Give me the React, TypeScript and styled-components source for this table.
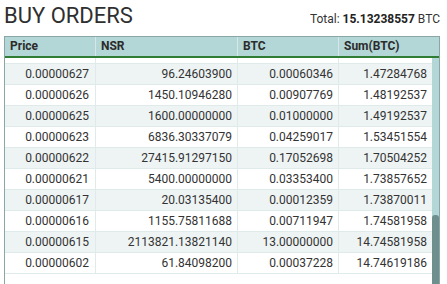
import React from "react";
import styled, { createGlobalStyle } from "styled-components";

const GlobalStyle = createGlobalStyle`
  html, body { margin: 0; padding: 0; background: #ffffff; }
  body { font-family: Roboto, "Liberation Sans", Arial, sans-serif; color: #333333; }
`;

const Page = styled.div`
  width: 447px;
  height: 284px;
  overflow: hidden;
  padding: 0 7px 0 4px;
  box-sizing: border-box;
`;

const TitleBar = styled.div`
  display: flex;
  align-items: baseline;
  justify-content: space-between;
  padding-top: 3px;
  height: 33px;
`;

const Title = styled.h1`
  margin: 0;
  font-size: 22px;
  line-height: 26px;
  font-weight: 400;
  color: #2f2f2f;
  letter-spacing: 0;
`;

const Total = styled.div`
  font-size: 12px;
  line-height: 16px;
  color: #333333;
  b { font-weight: 700; color: #222222; }
`;

const Panel = styled.div`
  border: 1px solid #8aa6a6;
  border-bottom: none;
  display: flex;
  flex-direction: column;
`;

const COLS = "91px 142px 101px 1fr";

const HeaderRow = styled.div`
  display: grid;
  grid-template-columns: ${COLS};
  background: #b3d6d6;
  border-bottom: 2px solid #2f7d34;
`;

const HeaderCell = styled.div<{ $last?: boolean }>`
  height: 19px;
  line-height: 19px;
  padding-left: 5px;
  font-size: 12px;
  font-weight: 700;
  color: #2b2b2b;
  border-right: ${(p) => (p.$last ? "none" : "1px solid #d6e7e7")};
`;

const Body = styled.div`
  display: flex;
  height: 240px;
  overflow: hidden;
`;

const Rows = styled.div`
  flex: 1;
  display: flex;
  flex-direction: column;
`;

const Row = styled.div<{ $shade: boolean; $clip?: boolean }>`
  display: grid;
  grid-template-columns: ${COLS};
  flex: none;
  height: ${(p) => (p.$clip ? "5px" : "20px")};
  background: ${(p) => (p.$shade ? "#eef4f4" : "#ffffff")};
  border-bottom: 1px solid #dfeaea;
`;

const Cell = styled.div<{ $pad?: number; $last?: boolean }>`
  font-size: 12px;
  line-height: 20px;
  text-align: right;
  padding-right: ${(p) => p.$pad ?? 5}px;
  color: #333333;
  white-space: nowrap;
  overflow: hidden;
  border-right: ${(p) => (p.$last ? "none" : "1px solid #dfeaea")};
`;

const Track = styled.div`
  width: 7px;
  flex: none;
  background: #b3d6d6;
  display: flex;
  flex-direction: column;
`;

const ThumbGap = styled.div<{ $offset: number }>`
  flex: none;
  height: ${(p) => p.$offset}px;
`;

const Thumb = styled.div`
  flex: 1;
  background: #6f8f8f;
  border-radius: 3px 3px 0 0;
`;

const rows: [string, string, string, string][] = [
  ["0.00000627", "96.24603900", "0.00060346", "1.47284768"],
  ["0.00000626", "1450.10946280", "0.00907769", "1.48192537"],
  ["0.00000625", "1600.00000000", "0.01000000", "1.49192537"],
  ["0.00000623", "6836.30337079", "0.04259017", "1.53451554"],
  ["0.00000622", "27415.91297150", "0.17052698", "1.70504252"],
  ["0.00000621", "5400.00000000", "0.03353400", "1.73857652"],
  ["0.00000617", "20.03135400", "0.00012359", "1.73870011"],
  ["0.00000616", "1155.75811688", "0.00711947", "1.74581958"],
  ["0.00000615", "2113821.13821140", "13.00000000", "14.74581958"],
  ["0.00000602", "61.84098200", "0.00037228", "14.74619186"],
];

export default function App() {
  return (
    <>
      <GlobalStyle />
      <Page>
        <TitleBar>
          <Title>BUY ORDERS</Title>
          <Total>
            Total: <b>15.13238557</b> BTC
          </Total>
        </TitleBar>
        <Panel>
          <HeaderRow>
            <HeaderCell>Price</HeaderCell>
            <HeaderCell>NSR</HeaderCell>
            <HeaderCell>BTC</HeaderCell>
            <HeaderCell $last>Sum(BTC)</HeaderCell>
          </HeaderRow>
          <Body>
            <Rows>
              <Row $shade={false} $clip>
                <Cell />
                <Cell />
                <Cell />
                <Cell $last />
              </Row>
              {rows.map((r, i) => (
                <Row key={r[0]} $shade={i % 2 === 0}>
                  <Cell $pad={6}>{r[0]}</Cell>
                  <Cell>{r[1]}</Cell>
                  <Cell>{r[2]}</Cell>
                  <Cell $last $pad={5}>{r[3]}</Cell>
                </Row>
              ))}
            </Rows>
            <Track>
              <ThumbGap $offset={157} />
              <Thumb />
            </Track>
          </Body>
        </Panel>
      </Page>
    </>
  );
}
